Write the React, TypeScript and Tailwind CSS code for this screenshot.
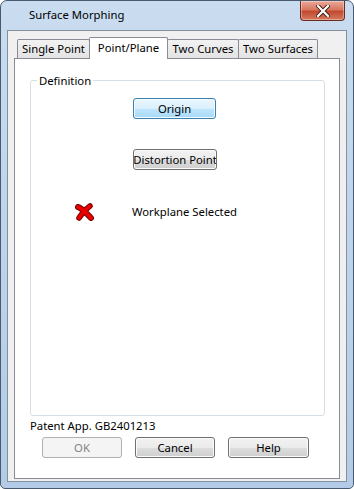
const font = { fontFamily: '"Noto Sans", "Liberation Sans", sans-serif' };

const btnBase =
  'h-[21px] rounded-[3px] border text-[11.3px] leading-none flex items-center justify-center whitespace-nowrap overflow-hidden';
const btnNormal =
  btnBase +
  ' border-[#707070] text-black bg-[linear-gradient(to_bottom,#f2f2f2_0%,#ebebeb_50%,#dddddd_51%,#cfcfcf_100%)] shadow-[inset_0_0_0_1px_#fcfcfc]';
const btnDefault =
  btnBase +
  ' border-[#3c7fb1] text-black bg-[linear-gradient(to_bottom,#eaf6fd_0%,#d9f0fc_50%,#bee6fd_51%,#a7d9f5_100%)] shadow-[inset_0_0_0_1px_#f4fbff]';
const btnDisabled =
  btnBase + ' border-[#adb2b5] text-[#838383] bg-[#f4f4f4]';

const tabs = [
  { label: 'Single Point', w: 'w-[73px]' },
  { label: 'Point/Plane', w: 'w-[79px]' },
  { label: 'Two Curves', w: 'w-[72px]' },
  { label: 'Two Surfaces', w: 'w-[80px]' },
];

function RedCross() {
  return (
    <svg width="20" height="18" viewBox="0 0 20 18">
      <path d="M3 4 C7 5 11 10 16 15" stroke="#7a0000" strokeWidth="6" strokeLinecap="round" fill="none" />
      <path d="M15 3 C11 6 7 10 4 15" stroke="#7a0000" strokeWidth="5.5" strokeLinecap="round" fill="none" />
      <path d="M3 4 C7 5 11 10 16 15" stroke="#e60000" strokeWidth="4" strokeLinecap="round" fill="none" />
      <path d="M15 3 C11 6 7 10 4 15" stroke="#e60000" strokeWidth="3.5" strokeLinecap="round" fill="none" />
    </svg>
  );
}

function CloseButton() {
  return (
    <div className="absolute top-0 right-[8px] w-[45px] h-[20px] rounded-b-[4px] border border-t-0 border-[#6b2b22] bg-[linear-gradient(to_bottom,#e9a99b_0%,#d9785f_45%,#c24a30_55%,#d47a5f_100%)] shadow-[inset_0_0_0_1px_rgba(255,255,255,0.35)] flex items-center justify-center">
      <svg width="14" height="12" viewBox="0 0 14 12">
        <path d="M2 1 L12 11 M12 1 L2 11" stroke="#3b1a14" strokeWidth="4" strokeLinecap="square" />
        <path d="M2 1 L12 11 M12 1 L2 11" stroke="#ffffff" strokeWidth="2.2" strokeLinecap="square" />
      </svg>
    </div>
  );
}

export default function App() {
  return (
    <div style={font} className="w-[354px] h-[489px] text-black text-[11.3px]">
      <div className="relative w-full h-full flex flex-col rounded-t-[7px] rounded-b-[5px] border border-[#4a5a6e] bg-[linear-gradient(to_bottom,#c9dcf0,#bcd2ea_60%,#b3cbe6)]">
        <div className="h-[29px] shrink-0 flex items-center pl-[28px]">Surface Morphing</div>
        <CloseButton />
        <div className="flex-1 mx-[6px] mb-[6px] border border-[#83919f] bg-[#f0f0f0] flex flex-col pt-[6px] pl-[6px] pr-[6px] pb-[2px]">
          <div className="flex h-[21px] items-end pl-[3px] relative z-10">
            {tabs.map((t, i) =>
              i === 1 ? (
                <div
                  key={t.label}
                  className={t.w + ' shrink-0 h-[22px] -mb-px bg-white border border-b-0 border-[#898c95] flex items-center justify-center rounded-t-[2px] -ml-px'}
                >
                  {t.label}
                </div>
              ) : (
                <div
                  key={t.label}
                  className={t.w + ' shrink-0 h-[19px] border border-b-0 border-[#898c95] bg-[linear-gradient(to_bottom,#f2f2f2,#e3e3e3)] flex items-center justify-center rounded-t-[2px] -ml-px first:ml-0'}
                >
                  {t.label}
                </div>
              ),
            )}
          </div>
          <div className="flex-1 bg-white border border-[#898c95] flex flex-col px-[15px] pt-[16px] pb-[20px]">
            <fieldset className="flex-1 border border-[#d5dfe5] rounded-[3px] mr-[-1px] flex flex-col">
              <legend className="ml-[6px] px-[2px] leading-none">Definition</legend>
              <div className="pl-[102px] pt-[12px] flex flex-col gap-[30px]">
                <div className={btnDefault + ' w-[83px]'}>Origin</div>
                <div className={btnNormal + ' w-[84px]'}>Distortion Point</div>
              </div>
              <div className="flex items-center mt-[33px] pl-[44px]">
                <RedCross />
                <span className="ml-[37px]">Workplane Selected</span>
              </div>
            </fieldset>
            <div className="mt-[2px] leading-[16px]">Patent App. GB2401213</div>
            <div className="flex mt-[3px] pl-[12px] gap-[13px]">
              <div className={btnDisabled + ' w-[80px]'}>OK</div>
              <div className={btnNormal + ' w-[80px]'}>Cancel</div>
              <div className={btnNormal + ' w-[81px]'}>Help</div>
            </div>
          </div>
        </div>
      </div>
    </div>
  );
}
